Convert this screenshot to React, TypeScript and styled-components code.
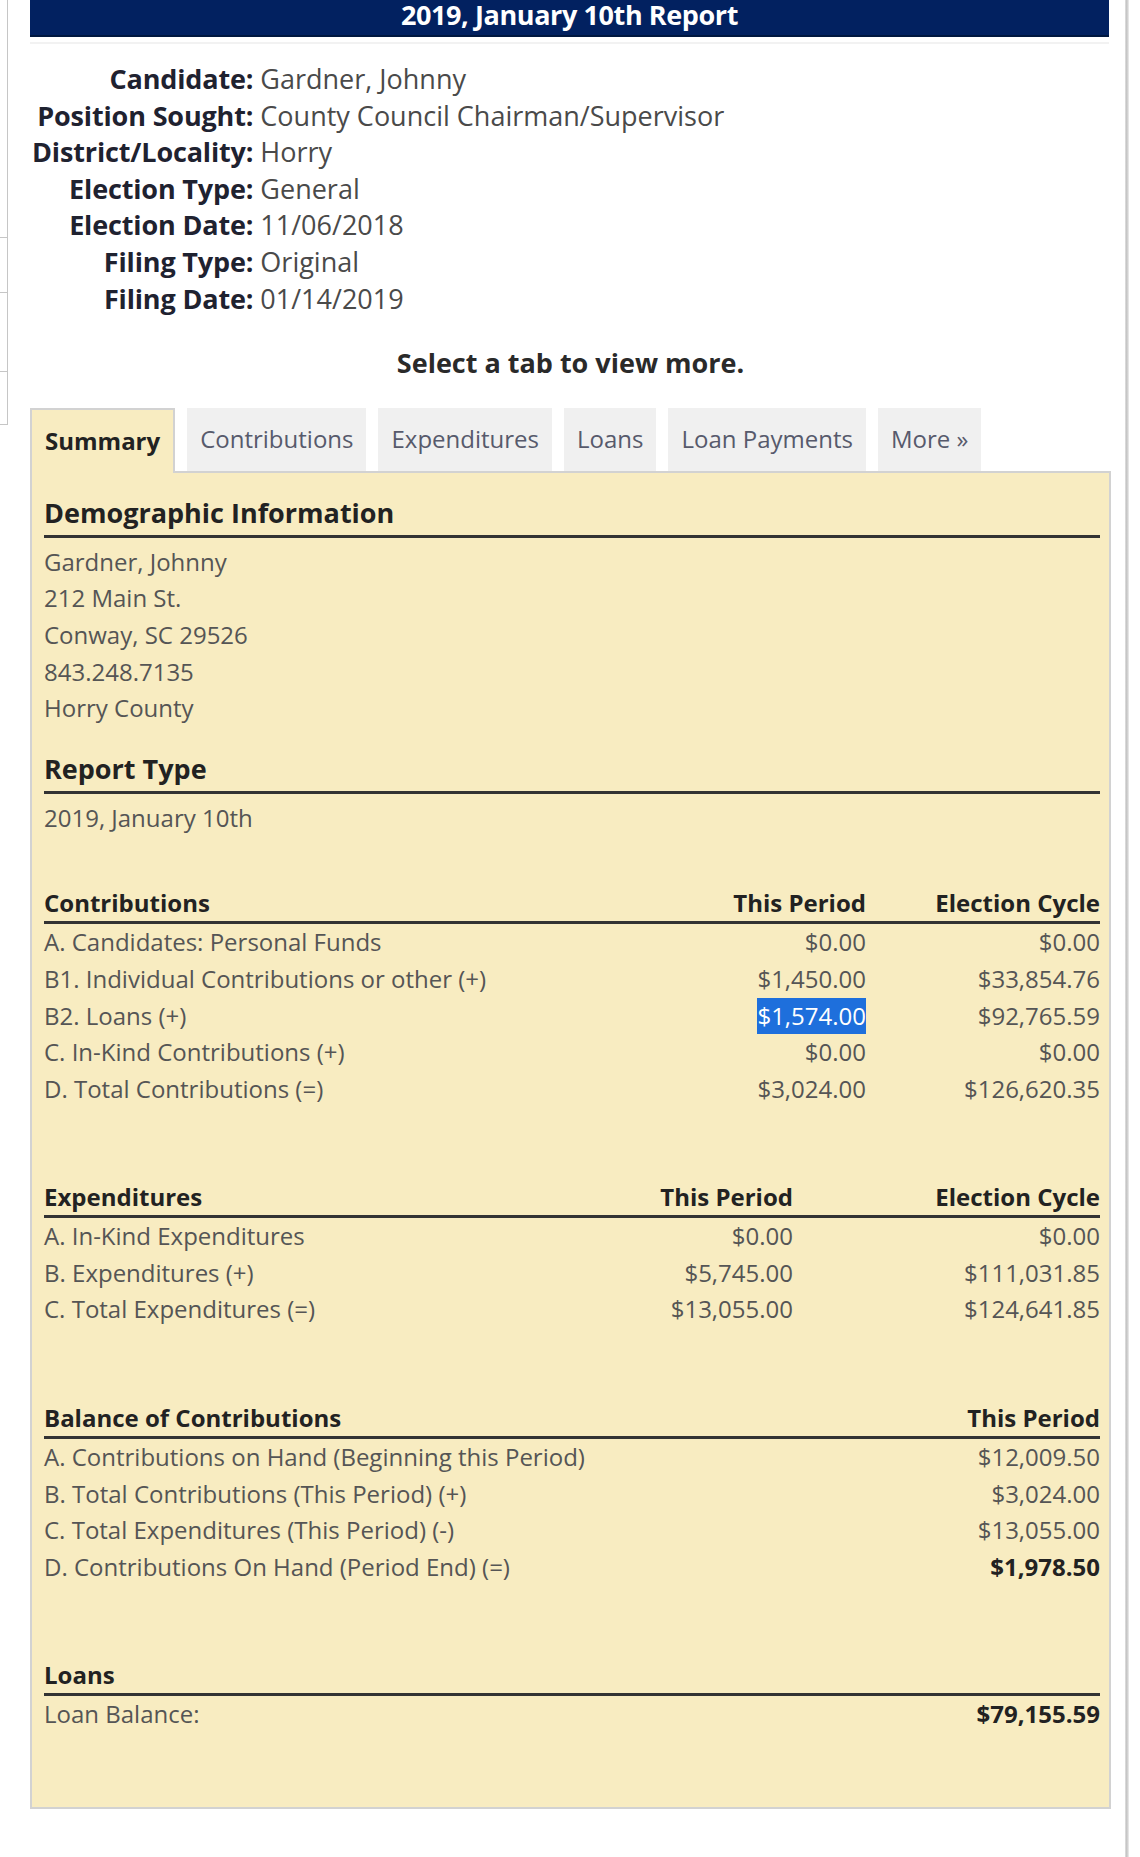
import React from "react";
import styled, { createGlobalStyle } from "styled-components";

const GlobalStyle = createGlobalStyle`
	body {
		margin: 0;
		background: #fff;
		font-family: "Open Sans", "Liberation Sans", sans-serif;
	}
`;

type Row = { label: string; values: string[]; strong?: boolean; selected?: number };

type Table = { title: string; heads: string[]; cols: string; rows: Row[] };

const info = [
	["Candidate:", "Gardner, Johnny"],
	["Position Sought:", "County Council Chairman/Supervisor"],
	["District/Locality:", "Horry"],
	["Election Type:", "General"],
	["Election Date:", "11/06/2018"],
	["Filing Type:", "Original"],
	["Filing Date:", "01/14/2019"],
];

const tabs = ["Summary", "Contributions", "Expenditures", "Loans", "Loan Payments", "More »"];

const demographic = ["Gardner, Johnny", "212 Main St.", "Conway, SC 29526", "843.248.7135", "Horry County"];

const tables: Table[] = [
	{
		title: "Contributions",
		heads: ["This Period", "Election Cycle"],
		cols: "1fr 220px 234px",
		rows: [
			{ label: "A. Candidates: Personal Funds", values: ["$0.00", "$0.00"] },
			{ label: "B1. Individual Contributions or other (+)", values: ["$1,450.00", "$33,854.76"] },
			{ label: "B2. Loans (+)", values: ["$1,574.00", "$92,765.59"], selected: 0 },
			{ label: "C. In-Kind Contributions (+)", values: ["$0.00", "$0.00"] },
			{ label: "D. Total Contributions (=)", values: ["$3,024.00", "$126,620.35"] },
		],
	},
	{
		title: "Expenditures",
		heads: ["This Period", "Election Cycle"],
		cols: "1fr 220px 307px",
		rows: [
			{ label: "A. In-Kind Expenditures", values: ["$0.00", "$0.00"] },
			{ label: "B. Expenditures (+)", values: ["$5,745.00", "$111,031.85"] },
			{ label: "C. Total Expenditures (=)", values: ["$13,055.00", "$124,641.85"] },
		],
	},
	{
		title: "Balance of Contributions",
		heads: ["This Period"],
		cols: "1fr 234px",
		rows: [
			{ label: "A. Contributions on Hand (Beginning this Period)", values: ["$12,009.50"] },
			{ label: "B. Total Contributions (This Period) (+)", values: ["$3,024.00"] },
			{ label: "C. Total Expenditures (This Period) (-)", values: ["$13,055.00"] },
			{ label: "D. Contributions On Hand (Period End) (=)", values: ["$1,978.50"], strong: true },
		],
	},
	{
		title: "Loans",
		heads: [""],
		cols: "1fr 234px",
		rows: [{ label: "Loan Balance:", values: ["$79,155.59"], strong: true }],
	},
];

function App() {
	return (
		<>
			<GlobalStyle />
			<Page>
				<LeftEdge>
					<EdgeCell $h={238} />
					<EdgeCell $h={55} />
					<EdgeCell $h={79} />
					<EdgeCell $h={53} />
				</LeftEdge>
				<Main>
					<TitleWrap>
						<TitleBar>2019, January 10th Report</TitleBar>
					</TitleWrap>

					<InfoList>
						{info.map(([label, value]) => (
							<React.Fragment key={label}>
								<InfoLabel>{label}</InfoLabel>
								<InfoValue>{value}</InfoValue>
							</React.Fragment>
						))}
					</InfoList>

					<Prompt>Select a tab to view more.</Prompt>

					<TabBar>
						{tabs.map((t, i) => (
							<Tab key={t} $active={i === 0}>
								{t}
							</Tab>
						))}
					</TabBar>

					<Panel>
						<Heading>Demographic Information</Heading>
						{demographic.map((line) => (
							<TextLine key={line}>{line}</TextLine>
						))}

						<Heading $spaced>Report Type</Heading>
						<TextLine>2019, January 10th</TextLine>

						{tables.map((table, ti) => (
							<SummaryTable key={table.title} $cols={table.cols} $first={ti === 0}>
								<HeadCell>{table.title}</HeadCell>
								{table.heads.map((h, hi) => (
									<HeadCell key={hi} $right>
										{h}
									</HeadCell>
								))}
								{table.rows.map((row) => (
									<React.Fragment key={row.label}>
										<Cell>{row.label}</Cell>
										{row.values.map((v, vi) => (
											<Cell key={vi} $right $strong={row.strong}>
												{row.selected === vi ? <Selected>{v}</Selected> : v}
											</Cell>
										))}
									</React.Fragment>
								))}
							</SummaryTable>
						))}
					</Panel>
				</Main>
				<RightRule />
			</Page>
		</>
	);
}

export default App;

const Page = styled.div`
	display: flex;
	align-items: stretch;
	min-height: 1857px;
	background: #fff;
`;

const LeftEdge = styled.div`
	width: 8px;
	display: flex;
	flex-direction: column;
	flex-shrink: 0;
`;

const EdgeCell = styled.div<{ $h: number }>`
	height: ${(p) => p.$h}px;
	box-sizing: border-box;
	border-right: 1px solid #c6c6c6;
	border-bottom: 1px solid #c6c6c6;
`;

const Main = styled.main`
	width: 1081px;
	margin-left: 22px;
	flex-shrink: 0;
	align-self: flex-start;
`;

const RightRule = styled.div`
	width: 4px;
	margin-left: 14px;
	background: linear-gradient(to right, #e2e2e2, #c4c4c4 40%, #d6d6d6 70%, #f0f0f0);
`;

const TitleWrap = styled.div`
	padding-bottom: 5px;
	border-bottom: 2px solid #f2f2f2;
	width: 1079px;
`;

const TitleBar = styled.div`
	height: 35px;
	background: #022160;
	border-bottom: 2px solid #00173f;
	color: #fff;
	font-size: 27px;
	font-weight: 700;
	line-height: 29px;
	letter-spacing: -0.4px;
	text-align: center;
`;

const InfoList = styled.div`
	display: grid;
	grid-template-columns: max-content 1fr;
	column-gap: 7px;
	margin-top: 17px;
	padding-left: 2px;
	font-size: 27px;
	line-height: 36.6px;
`;

const InfoLabel = styled.div`
	text-align: right;
	font-weight: 700;
	letter-spacing: -0.15px;
	color: #1f2230;
	white-space: nowrap;
`;

const InfoValue = styled.div`
	color: #4a4a4a;
	white-space: nowrap;
`;

const Prompt = styled.div`
	margin-top: 28px;
	text-align: center;
	font-size: 27px;
	font-weight: 700;
	line-height: 36.6px;
	color: #2a2a2a;
`;

const TabBar = styled.div`
	display: flex;
	gap: 12px;
	margin-top: 26px;
	height: 63px;
`;

const Tab = styled.div<{ $active?: boolean }>`
	position: relative;
	z-index: 1;
	box-sizing: border-box;
	height: ${(p) => (p.$active ? "65px" : "63px")};
	padding: 0 13px;
	font-size: 24px;
	line-height: 62px;
	white-space: nowrap;
	font-weight: ${(p) => (p.$active ? 700 : 400)};
	color: ${(p) => (p.$active ? "#222" : "#575a6c")};
	background: ${(p) => (p.$active ? "#f8ecc1" : "#f0f0f0")};
	border: ${(p) => (p.$active ? "2px solid #d2d2d2" : "none")};
	border-bottom: none;
`;

const Panel = styled.section`
	box-sizing: border-box;
	background: #f8ecc1;
	border: 2px solid #d2d2d2;
	padding: 22px 9px 2px 12px;
`;

const Heading = styled.h2<{ $spaced?: boolean }>`
	margin: ${(p) => (p.$spaced ? "24px" : "0")} 0 6px;
	padding-bottom: 4px;
	border-bottom: 3px solid #333;
	font-size: 27px;
	font-weight: 700;
	line-height: 36px;
	color: #222;
`;

const TextLine = styled.div`
	font-size: 24px;
	line-height: 36.6px;
	color: #555;
`;

const SummaryTable = styled.div<{ $cols: string; $first?: boolean }>`
	display: grid;
	grid-template-columns: ${(p) => p.$cols};
	margin-top: ${(p) => (p.$first ? "49px" : "0")};
	margin-bottom: 72px;
	font-size: 24px;
`;

const HeadCell = styled.div<{ $right?: boolean }>`
	font-weight: 700;
	line-height: 36px;
	color: #222;
	text-align: ${(p) => (p.$right ? "right" : "left")};
	border-bottom: 3px solid #333;
	white-space: nowrap;
`;

const Cell = styled.div<{ $right?: boolean; $strong?: boolean }>`
	line-height: 36.6px;
	color: ${(p) => (p.$strong ? "#222" : "#555")};
	font-weight: ${(p) => (p.$strong ? 700 : 400)};
	text-align: ${(p) => (p.$right ? "right" : "left")};
	white-space: nowrap;
`;

const Selected = styled.span`
	display: inline-block;
	background: #1e6fdc;
	color: #fff;
	line-height: 36px;
`;
